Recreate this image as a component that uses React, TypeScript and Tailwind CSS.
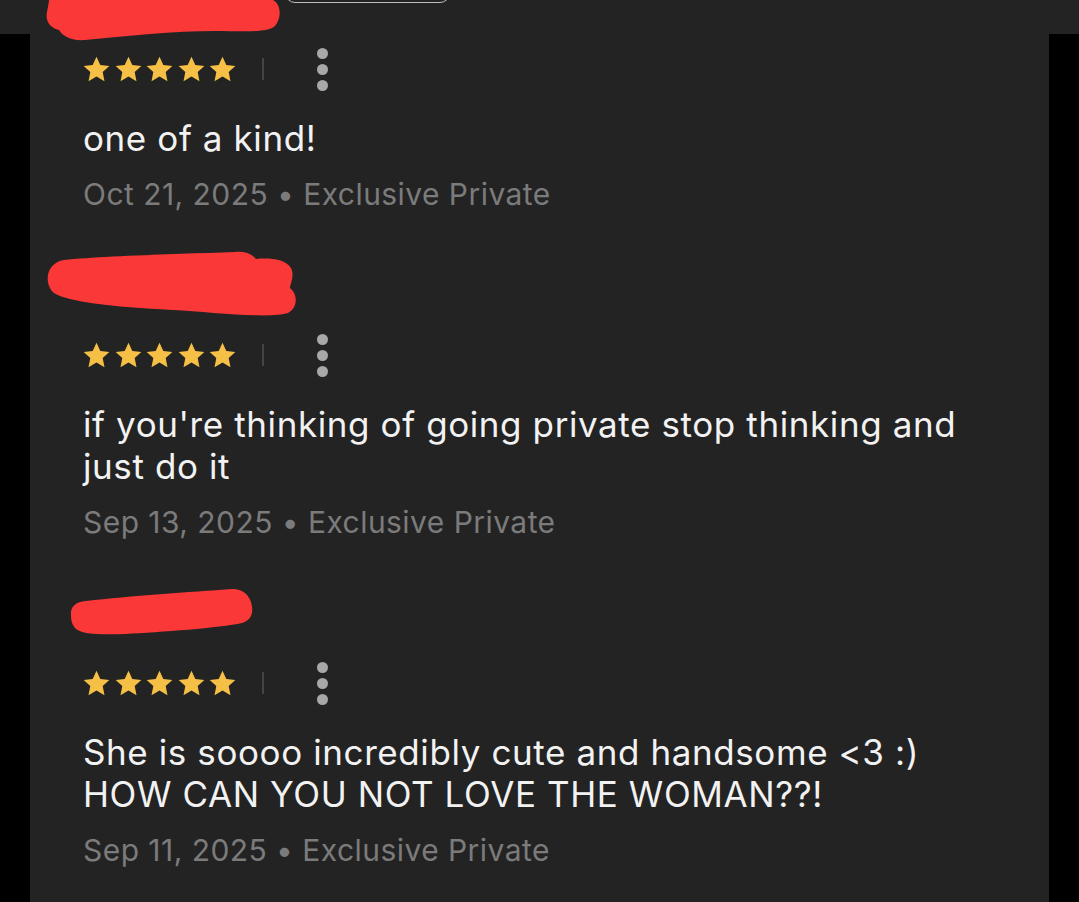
import React from "react";

type Review = {
  scribble?: { d: string; h: number };
  text: string;
  date: string;
  tier: string;
};

const reviews: Review[] = [
  { text: "one of a kind!", date: "Oct 21, 2025", tier: "Exclusive Private" },
  {
    scribble: {
      h: 72,
      d: "M20 40 C14 28 20 14 34 12 C70 8 150 6 205 4 C215 3 222 6 226 11 C238 10 254 10 261 20 C265 28 260 36 260 40 C268 46 268 60 258 65 C240 71 180 64 143 62 C110 60 70 58 40 51 C28 48 22 45 20 40 Z",
    },
    text: "if you're thinking of going private stop thinking and just do it",
    date: "Sep 13, 2025",
    tier: "Exclusive Private",
  },
  {
    scribble: {
      h: 56,
      d: "M41 32 C40 22 46 18 56 17 C100 12 160 8 203 5 C212 5 218 10 221 18 C224 28 222 36 212 39 C190 44 130 48 95 50 C70 51 52 50 46 45 C42 41 41 36 41 32 Z",
    },
    text: "She is soooo incredibly cute and handsome <3 :)\nHOW CAN YOU NOT LOVE THE WOMAN??!",
    date: "Sep 11, 2025",
    tier: "Exclusive Private",
  },
];

function Star() {
  return (
    <svg viewBox="0 0 24 24" className="w-[27px] h-[27px]" fill="#f5c045">
      <path d="M12 0.6l3.4 7.3 8 .9-5.9 5.5 1.6 8.1L12 18.3l-7.1 4.1 1.6-8.1L.6 8.8l8-.9z" strokeLinejoin="round" />
    </svg>
  );
}

function ReviewItem({ review, first }: { review: Review; first: boolean }) {
  return (
    <div className={first ? "" : "mt-[48px]"}>
      {review.scribble && (
        <div className="h-[48px] flex items-center -ml-[53px]">
          <svg width="300" height={review.scribble.h} className="shrink-0">
            <path d={review.scribble.d} fill="#fb3838" />
          </svg>
        </div>
      )}
      <div className={`h-[44px] flex items-center ${review.scribble ? "mt-[25px]" : ""}`}>
        <div className="flex items-center gap-[4.5px]">
          {[0, 1, 2, 3, 4].map((i) => (
            <Star key={i} />
          ))}
        </div>
        <div className="ml-[26px] w-[2px] h-[22px] bg-[#444444]" />
        <button className="ml-[53px] flex flex-col gap-[5px]">
          <span className="w-[11px] h-[11px] rounded-full bg-[#a8a8a8]" />
          <span className="w-[11px] h-[11px] rounded-full bg-[#a8a8a8]" />
          <span className="w-[11px] h-[11px] rounded-full bg-[#a8a8a8]" />
        </button>
      </div>
      <p className="mt-[26px] text-[35px] tracking-[0.017em] leading-[42px] text-[#f2f2f2] whitespace-pre-line">
        {review.text}
      </p>
      <p className="mt-[17px] text-[30px] tracking-[0.015em] leading-[36px] text-[#7b7b7b]">
        {review.date} • {review.tier}
      </p>
    </div>
  );
}

export default function App() {
  return (
    <div
      className="min-h-[902px] bg-black"
      style={{ fontFamily: "Inter, 'Noto Sans', sans-serif" }}
    >
      <div className="relative z-10 h-[34px] bg-[#232323] flex items-start">
        <svg width="238" height="42" className="ml-[45px] shrink-0">
          <path
            d="M4 0 H228 C236 4 237 18 230 26 C222 33 200 31 170 31 C130 31 80 36 40 40 C25 41 18 36 14 30 C6 28 0 22 2 12 C3 6 4 2 4 0 Z"
            fill="#fb3838"
          />
        </svg>
        <div className="ml-[2px] -mt-[37px] w-[165px] h-[40px] rounded-[10px] border-[1.5px] border-[#bdbdbd]" />
      </div>
      <div className="mx-[30px] bg-[#232323] pl-[53px] pr-[53px] pt-[13px] pb-[40px] min-h-[868px]">
        {reviews.map((r, i) => (
          <ReviewItem key={i} review={r} first={i === 0} />
        ))}
      </div>
    </div>
  );
}
